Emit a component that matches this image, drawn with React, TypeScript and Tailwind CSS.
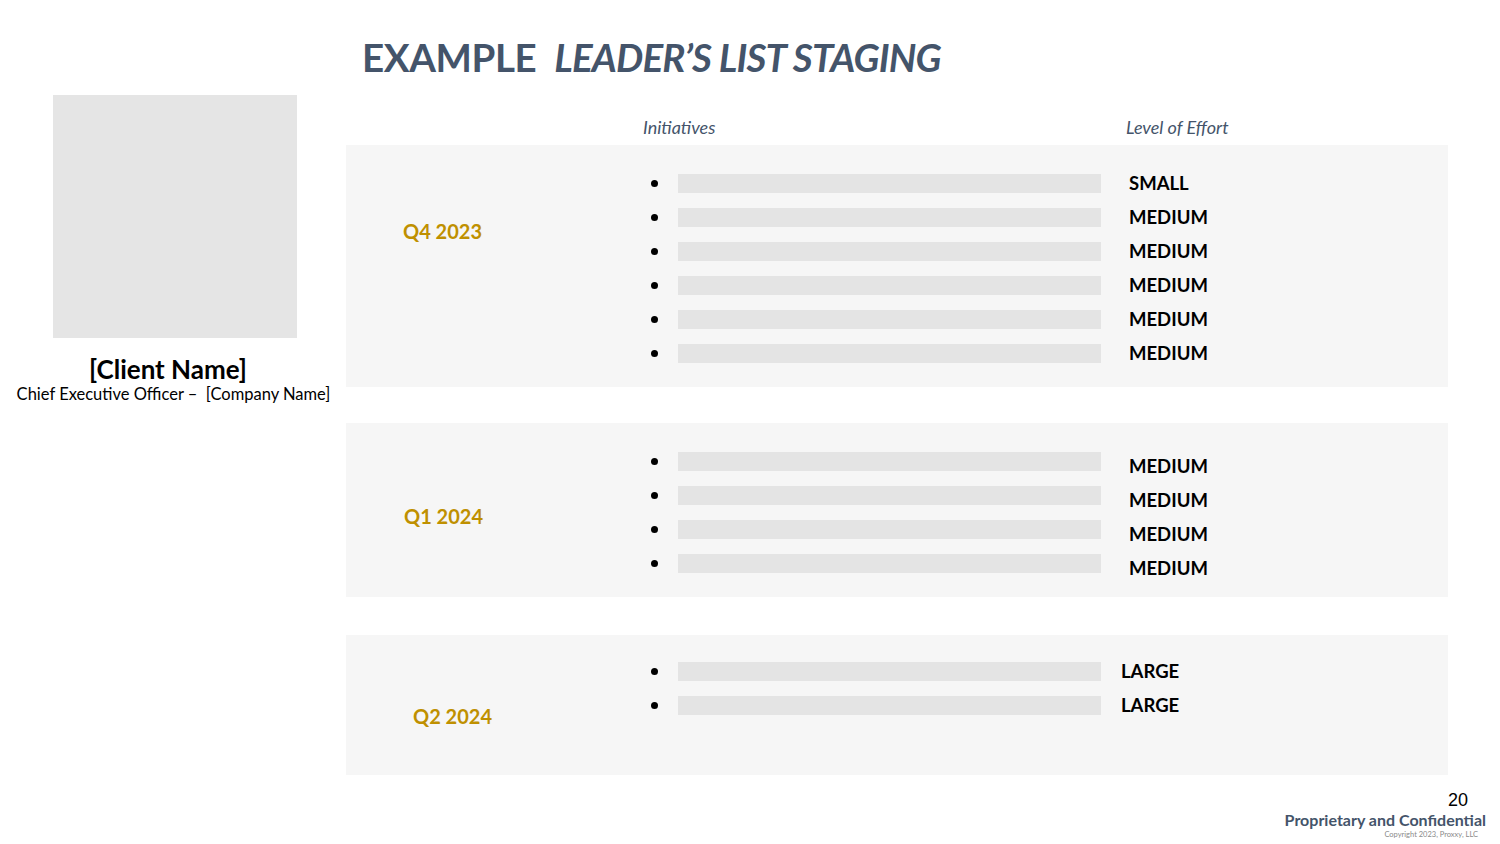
import React from "react";

type Item = { effort: string };

type Stage = {
  quarter: string;
  items: Item[];
  boxClass: string;
  quarterClass: string;
  listClass: string;
  effortClass: string;
};

const STAGES: Stage[] = [
  {
    quarter: "Q4 2023",
    items: [
      { effort: "SMALL" },
      { effort: "MEDIUM" },
      { effort: "MEDIUM" },
      { effort: "MEDIUM" },
      { effort: "MEDIUM" },
      { effort: "MEDIUM" },
    ],
    boxClass: "h-[242px]",
    quarterClass: "pl-[57px] pt-[74px]",
    listClass: "pt-[21px]",
    effortClass: "ml-[28px]",
  },
  {
    quarter: "Q1 2024",
    items: [{ effort: "MEDIUM" }, { effort: "MEDIUM" }, { effort: "MEDIUM" }, { effort: "MEDIUM" }],
    boxClass: "h-[174px] mt-[36px]",
    quarterClass: "pl-[58px] pt-[81px]",
    listClass: "pt-[21px]",
    effortClass: "ml-[28px] pt-[10px]",
  },
  {
    quarter: "Q2 2024",
    items: [{ effort: "LARGE" }, { effort: "LARGE" }],
    boxClass: "h-[140px] mt-[38px]",
    quarterClass: "pl-[67px] pt-[69px]",
    listClass: "pt-[19px]",
    effortClass: "ml-[20px]",
  },
];

function StageBox({ stage }: { stage: Stage }) {
  return (
    <div className={`flex bg-[#f6f6f6] ${stage.boxClass}`}>
      <div className={`w-[297px] shrink-0 ${stage.quarterClass}`}>
        <span className="text-[20px] font-bold leading-6 text-[#bf9000]">{stage.quarter}</span>
      </div>
      <div className={`flex flex-col ${stage.listClass}`}>
        {stage.items.map((item, i) => (
          <div key={i} className="flex h-[34px] items-center">
            <span className="ml-[8px] h-[7px] w-[7px] shrink-0 rounded-full bg-black" />
            <span className="ml-[20px] h-[19px] w-[423px] shrink-0 bg-[#e4e4e4]" />
            <span className={`text-[18.5px] font-bold leading-6 text-black ${stage.effortClass}`}>
              {item.effort}
            </span>
          </div>
        ))}
      </div>
    </div>
  );
}

export default function App() {
  return (
    <div className="flex h-[844px] w-[1500px] flex-col overflow-hidden bg-white font-['Lato','Liberation_Sans',sans-serif]">
      <div className="flex">
        {/* Client card */}
        <div className="flex w-[346px] shrink-0 flex-col pt-[95px]">
          <div className="ml-[53px] h-[243px] w-[244px] bg-[#e5e5e5]" />
          <div className="w-[336px] text-center">
            <div className="mt-[17px] text-[26px] font-bold leading-7 text-black">[Client Name]</div>
            <div className="mt-[1px] pl-[11px] whitespace-pre text-[16.5px] leading-5 text-black">
              Chief Executive Officer –  [Company Name]
            </div>
          </div>
        </div>

        {/* Staging table */}
        <div className="flex w-[1102px] flex-col">
          <h1 className="pl-[16px] pt-[34px] text-[38.5px] font-bold leading-[46px] tracking-[-0.4px] whitespace-pre text-[#44546a]">
            EXAMPLE  <span className="italic tracking-[-0.8px]">LEADER’S LIST STAGING</span>
          </h1>
          <div className="flex pt-[36px] pb-[7px] text-[18px] italic leading-[22px] text-[#44546a]">
            <span className="ml-[297px] w-[483px]">Initiatives</span>
            <span>Level of Effort</span>
          </div>
          {STAGES.map((s) => (
            <StageBox key={s.quarter} stage={s} />
          ))}
        </div>
      </div>

      {/* Footer */}
      <div className="flex flex-col items-end pr-[14px] pt-[15px]">
        <span className="mr-[18px] font-['Liberation_Sans',sans-serif] text-[18px] leading-5 text-black">20</span>
        <span className="text-[16px] font-bold leading-5 text-[#44546a]">Proprietary and Confidential</span>
        <span className="mr-[8px] text-[7.5px] leading-[10px] text-[#8a8a8a]">Copyright 2023, Proxxy, LLC</span>
      </div>
    </div>
  );
}
